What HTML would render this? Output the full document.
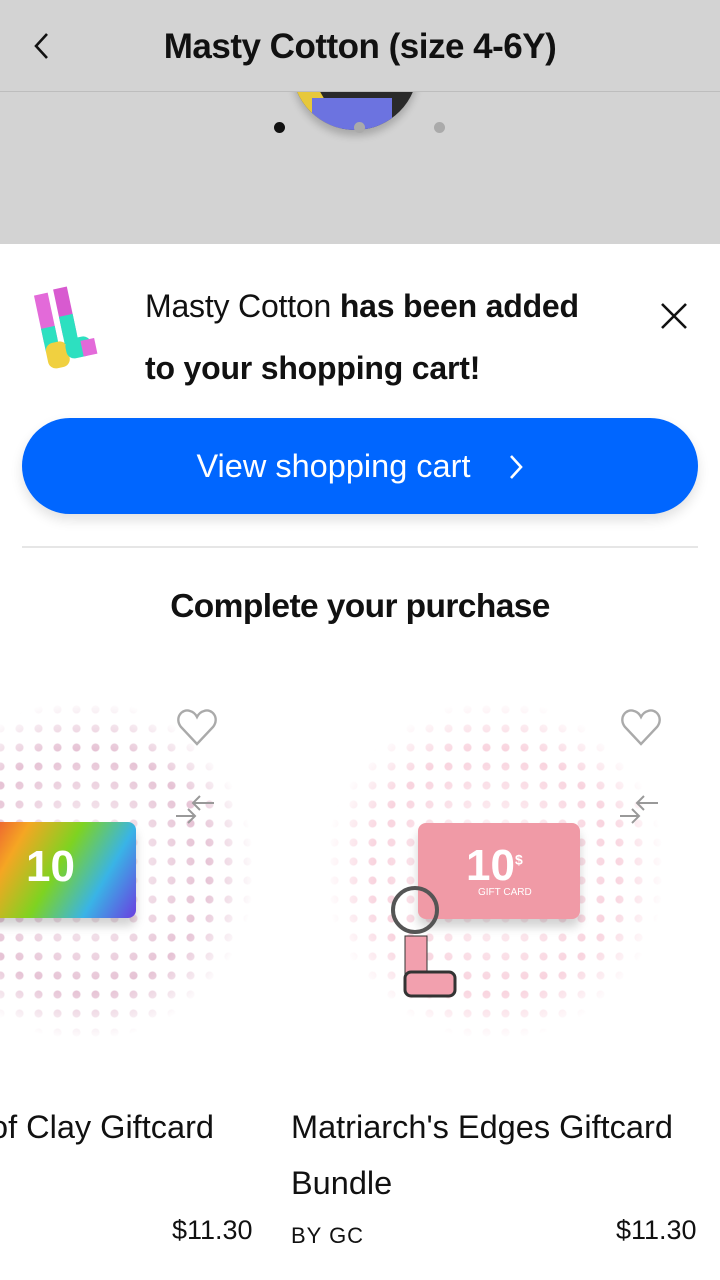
<!DOCTYPE html>
<html><head><meta charset="utf-8"><style>
*{margin:0;padding:0;box-sizing:border-box}
body{width:720px;height:1280px;overflow:hidden;background:#fff;font-family:"Liberation Sans",Arial,sans-serif;position:relative;color:#111}
.top{position:absolute;left:0;top:0;width:720px;height:244px;background:#d3d3d3}
.hdr{position:absolute;left:0;top:0;width:720px;height:92px;border-bottom:1px solid #bdbdbd;background:#d3d3d3}
.hdr h1{position:absolute;left:0;right:0;top:27px;text-align:center;font-size:35px;font-weight:bold;letter-spacing:-0.5px}
.sock{position:absolute;left:292px;top:60px;width:126px;height:70px;border-radius:0 0 63px 63px;background:#2a2a2a;overflow:hidden;box-shadow:0 6px 8px rgba(0,0,0,.2)}
.dot{position:absolute;width:11px;height:11px;border-radius:50%;top:122px}
.sheet{position:absolute;left:0;top:244px;width:720px;height:1036px;background:#fff;border-radius:22px 22px 0 0}
.msg{position:absolute;left:145px;top:275px;font-size:32px;line-height:62px;width:470px;letter-spacing:-0.2px}
.btn{position:absolute;left:22px;top:418px;width:676px;height:96px;border-radius:48px;background:#0066ff;color:#fff;font-size:32.5px;text-align:center;line-height:96px;box-shadow:0 6px 12px rgba(0,0,0,.12)}
.hr{position:absolute;left:22px;top:546px;width:676px;height:2px;background:#e6e6e6}
.ttl{position:absolute;left:0;right:0;top:588px;text-align:center;font-size:33.5px;font-weight:bold;letter-spacing:-0.6px}
.circ{position:absolute;width:340px;height:340px;border-radius:50%;background-image:radial-gradient(circle,var(--c) 3.5px,transparent 4.5px);background-size:19px 19px;-webkit-mask:radial-gradient(circle,rgba(0,0,0,.15) 10%,rgba(0,0,0,.8) 50%,transparent 71%);opacity:.75}
.card{position:absolute;width:160px;height:96px;border-radius:8px;color:#fff;font-weight:bold;box-shadow:0 8px 10px rgba(0,0,0,.18)}
.name{position:absolute;font-size:32.5px;line-height:56px}
.price{position:absolute;font-size:27px;top:1215px}
</style></head><body>
<div class="top"></div>
<div class="sock"><div style="position:absolute;left:0;top:0;width:30px;height:70px;background:#e7c83b;transform:skewX(30deg)"></div><div style="position:absolute;left:20px;top:38px;width:80px;height:40px;background:#6c73e0"></div><div style="position:absolute;right:12px;top:0;width:20px;height:30px;background:#e35ad8"></div></div>
<div class="hdr"><svg style="position:absolute;left:33px;top:32px" width="18" height="28"><path d="M14 2 L3 14 L14 26" fill="none" stroke="#111" stroke-width="2.6"/></svg><h1>Masty Cotton (size 4-6Y)</h1></div>
<div class="dot" style="left:274px;background:#111"></div>
<div class="dot" style="left:354px;background:#aaa"></div>
<div class="dot" style="left:434px;background:#aaa"></div>
<div class="sheet"></div>
<svg style="position:absolute;left:34px;top:282px" width="80" height="96"><g transform="rotate(-12 40 48)"><rect x="8" y="6" width="14" height="48" fill="#e36ad9"/><rect x="8" y="40" width="14" height="24" fill="#2de0c0"/><rect x="8" y="56" width="22" height="26" rx="8" fill="#f0d040"/><rect x="28" y="4" width="14" height="48" fill="#d85ad0"/><rect x="28" y="32" width="14" height="28" fill="#2de0c0"/><rect x="28" y="56" width="26" height="20" rx="8" fill="#2de0c0"/><rect x="44" y="60" width="14" height="16" fill="#e36ad9"/></g></svg>
<div class="msg">Masty Cotton <b>has been added</b><br><b>to your shopping cart!</b></div>
<svg style="position:absolute;left:660px;top:302px" width="28" height="28"><path d="M2 2 L26 26 M26 2 L2 26" stroke="#111" stroke-width="2.6"/></svg>
<div class="btn">View shopping cart <svg style="vertical-align:-3px;margin-left:28px" width="16" height="26"><path d="M3 2 L13 13 L3 24" fill="none" stroke="#fff" stroke-width="2.6"/></svg></div>
<div class="hr"></div>
<div class="ttl">Complete your purchase</div>
<div class="circ" style="left:-85px;top:700px;--c:#d59ab8"></div>
<div class="card" style="left:-24px;top:822px;width:160px;height:96px;background:linear-gradient(120deg,#e83a3a,#f5a623,#7ed321,#39b4e6,#6a3ee0)"><div style="position:absolute;left:50px;top:20px;font-size:44px">10</div></div>
<div class="circ" style="left:325px;top:700px;--c:#f4b6c8"></div>
<div class="card" style="left:418px;top:823px;width:162px;height:96px;background:#f09aa6"><div style="position:absolute;left:48px;top:18px;font-size:44px">10<sup style="font-size:14px">$</sup></div><div style="position:absolute;left:60px;top:64px;font-size:10px;font-weight:normal">GIFT CARD</div></div>
<svg style="position:absolute;left:385px;top:880px" width="80" height="140"><circle cx="30" cy="30" r="22" fill="none" stroke="#555" stroke-width="4"/><rect x="20" y="56" width="22" height="46" fill="#f2a0ae" stroke="#333"/><rect x="20" y="92" width="50" height="24" rx="6" fill="#f2a0ae" stroke="#333" stroke-width="3"/></svg>
<svg style="position:absolute;left:176px;top:707px" width="42" height="40"><path d="M21 37 L5 20 C-2 11 6 1 14 4 C18 5 20 8 21 10 C22 8 24 5 28 4 C36 1 44 11 37 20 Z" fill="none" stroke="#aaa" stroke-width="2.4"/></svg>
<svg style="position:absolute;left:620px;top:707px" width="42" height="40"><path d="M21 37 L5 20 C-2 11 6 1 14 4 C18 5 20 8 21 10 C22 8 24 5 28 4 C36 1 44 11 37 20 Z" fill="none" stroke="#aaa" stroke-width="2.4"/></svg>
<svg style="position:absolute;left:174px;top:794px" width="42" height="32"><path d="M40 9 H20 M26 2 L19 9 L26 16 M2 22 H20 M14 15 L21 22 L14 29" fill="none" stroke="#999" stroke-width="2"/></svg>
<svg style="position:absolute;left:618px;top:794px" width="42" height="32"><path d="M40 9 H20 M26 2 L19 9 L26 16 M2 22 H20 M14 15 L21 22 L14 29" fill="none" stroke="#999" stroke-width="2"/></svg>
<div class="name" style="left:-10px;top:1099px">of Clay Giftcard</div>
<div class="price" style="left:172px">$11.30</div>
<div class="name" style="left:291px;top:1099px;width:429px">Matriarch's Edges Giftcard Bundle</div>
<div style="position:absolute;left:291px;top:1223px;font-size:22px;letter-spacing:1px">BY GC</div>
<div class="price" style="left:616px">$11.30</div>
</body></html>
